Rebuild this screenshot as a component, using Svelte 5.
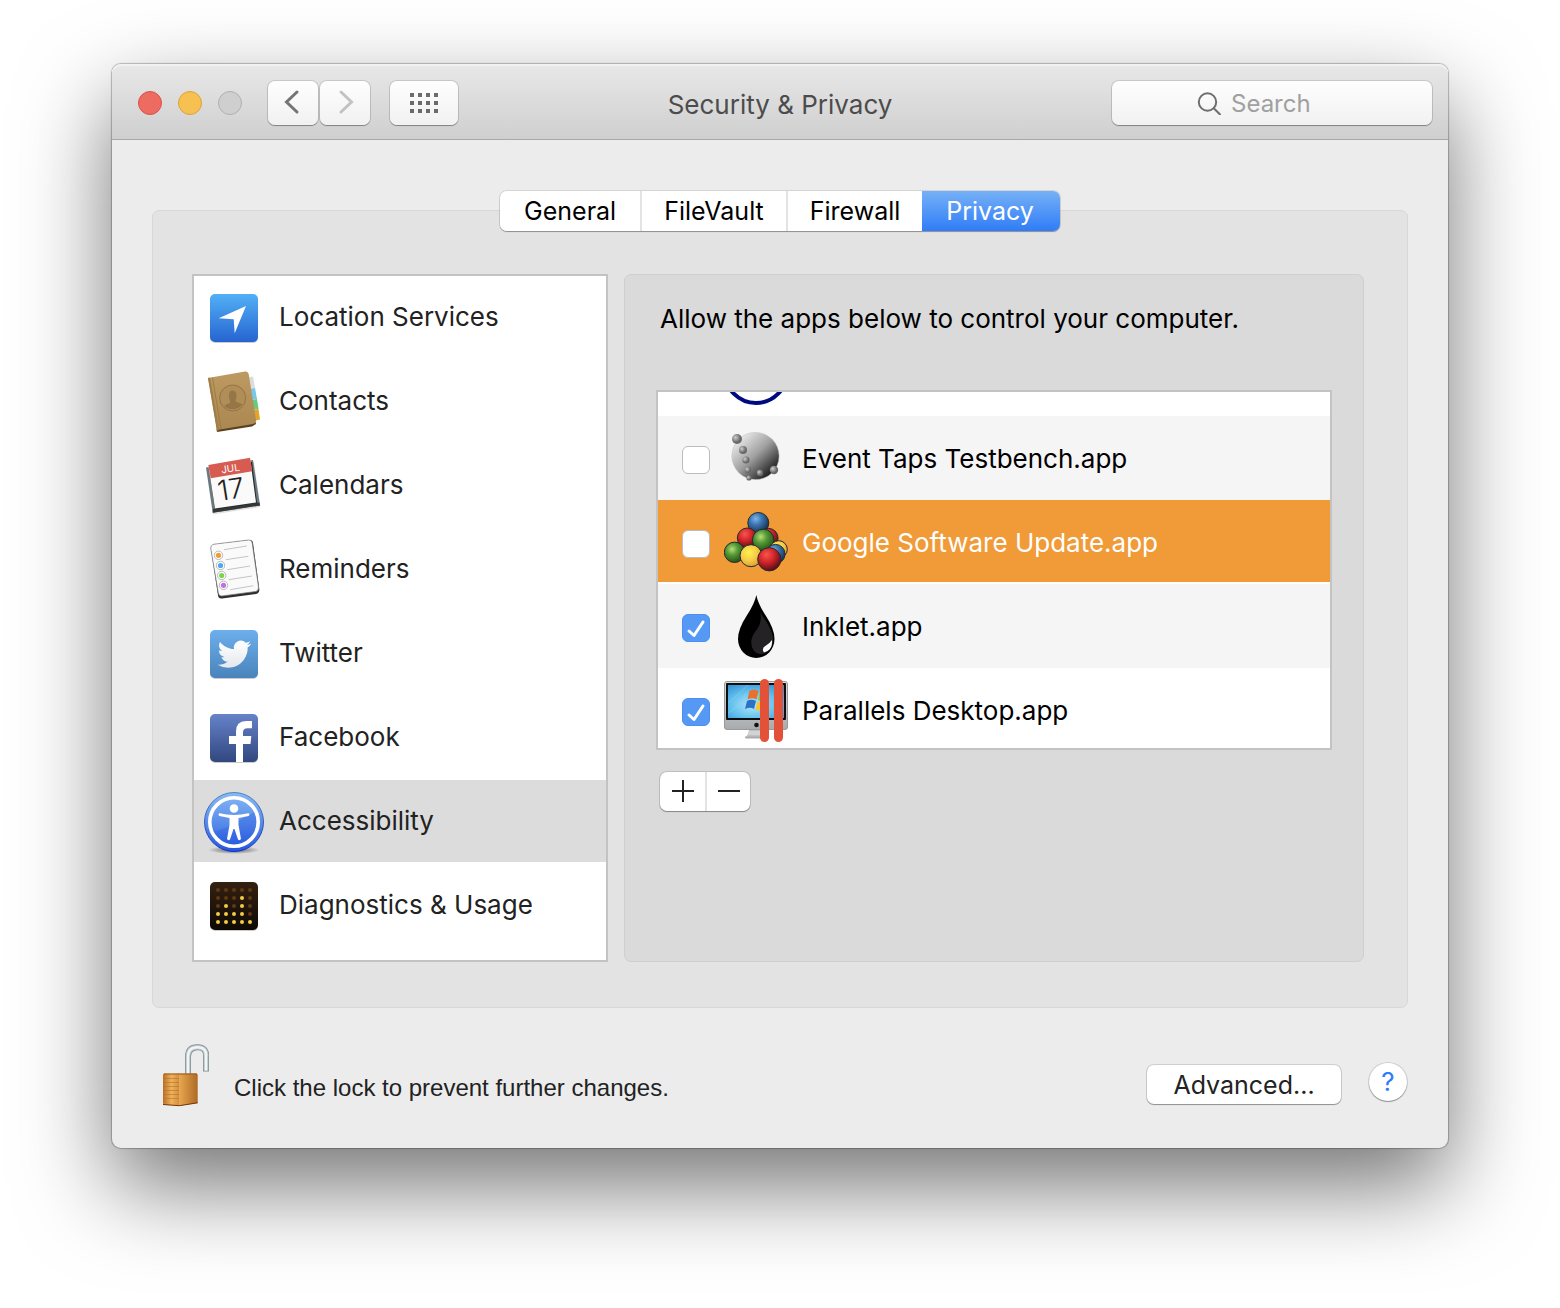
<script>
    let tabs = ['General', 'FileVault', 'Firewall', 'Privacy'];
    let activeTab = $state('Privacy');

    let services = [
        { id: 'location', name: 'Location Services' },
        { id: 'contacts', name: 'Contacts' },
        { id: 'calendars', name: 'Calendars' },
        { id: 'reminders', name: 'Reminders' },
        { id: 'twitter', name: 'Twitter' },
        { id: 'facebook', name: 'Facebook' },
        { id: 'accessibility', name: 'Accessibility' },
        { id: 'diagnostics', name: 'Diagnostics & Usage' }
    ];
    let activeService = $state('accessibility');

    let apps = $state([
        { id: 'taps', name: 'Event Taps Testbench.app', allowed: false },
        { id: 'google', name: 'Google Software Update.app', allowed: false },
        { id: 'inklet', name: 'Inklet.app', allowed: true },
        { id: 'parallels', name: 'Parallels Desktop.app', allowed: true }
    ]);
    let activeApp = $state('google');
    let query = $state('');

    // lit rows, counted from the bottom, for each column of the dot display
    let levels = [2, 3, 2, 4, 1];

    let taps = [
        [13, 12, 5], [19, 23, 4], [22, 33, 3.6], [24, 43, 3.2],
        [25, 51, 2.6], [36, 46, 3.2], [50, 43, 4.2]
    ];

    let balls = [
        [34.3, 12, 10.5, 'blue'], [44.5, 27, 9.6, 'red'], [23.3, 27, 10, 'red'],
        [39.3, 29, 10.8, 'green'], [54.7, 38.3, 8.6, 'yellow'], [51.5, 43, 9.6, 'blue'],
        [10.5, 41.3, 10.2, 'green'], [27, 44.7, 11, 'yellow'], [45.3, 48.3, 11.6, 'red']
    ];

    function removeApp() {
        apps = apps.filter(app => app.id !== activeApp);
    }
</script>

{#snippet serviceIcon(id)}
    <svg class="icon" viewBox="0 0 64 64" aria-hidden="true">
        {#if id === 'location'}
            <defs>
                <linearGradient id="locationBg" x2="0" y2="1"><stop stop-color="#52b0f5" /><stop offset="1" stop-color="#2664d1" /></linearGradient>
            </defs>
            <rect x="8" y="9" width="48" height="48" rx="5" fill="#000" opacity=".2" />
            <rect x="8" y="8" width="48" height="48" rx="5" fill="url(#locationBg)" />
            <path d="M44 20 16.7 32.3 31.7 33.3 32.7 47.3Z" fill="#fff" />
        {:else if id === 'contacts'}
            <defs>
                <linearGradient id="leather" x2="0" y2="1"><stop stop-color="#bd9a61" /><stop offset="1" stop-color="#ab8751" /></linearGradient>
            </defs>
            <path d="M45 7.5 51 6.5 53 18 47 19Z" fill="#dcdcdc" />
            <path d="M47 19 53 18 55 29 49 30Z" fill="#79c6e8" />
            <path d="M49 30 55 29 56.5 39 50 40Z" fill="#68ca7c" />
            <path d="M50 40 56.5 39 58 49.5 52 51Z" fill="#e0a52c" />
            <path d="M14.5 59 15 62 50 56.5 54 54 53 50Z" fill="#5b4120" />
            <path d="M6 8 43 1.5Q46 1 46.7 4L54 50Q54.3 53.3 51 54L15 60Z" fill="url(#leather)" />
            <path d="M6 8 8 7.6 17 59.5 15 61.5Z" fill="#a17d48" />
            <path d="M10.5 7.5 19 59" stroke="#987643" stroke-width=".8" />
            <circle cx="30.7" cy="28" r="13" fill="#b18e57" stroke="#957346" stroke-width="1" />
            <path d="M22 36.5Q24 34 28 33Q28.8 31.5 27.3 29Q25.5 21 30.2 20.5Q35.5 20.5 34.3 28Q33 31 34 32Q38 32.5 40.5 34.5Q33 43 22 36.5Z" fill="#967546" />
        {:else if id === 'calendars'}
            <path d="M5 15 52 8 58.5 53 11 60.5Z" fill="#000" opacity=".12" />
            <path d="M4 13.5 51 6 58 51.5 10.7 58.7Z" fill="#6b7880" />
            <path d="M11 55 57.5 48.5 58 51.5 10.7 58.7Z" fill="#343836" />
            <path d="M7 15 50 8 55 49 13 55.5Z" fill="#222826" />
            <path d="M6.3 11 48 3.7 54 48.5 13 54.5Z" fill="#fafafa" />
            <path d="M6.3 11 48 3.7 50.3 17.3 8.7 24.3Z" fill="#d75b50" />
            <text x="29" y="18" class="month" transform="rotate(-9 29 18)">JUL</text>
            <text x="30.5" y="45" class="day" transform="rotate(-9 30.5 45)">17</text>
        {:else if id === 'reminders'}
            <path d="M13 6.5 47 2Q50.5 1.5 51 5L57.3 51Q57.7 55 54 56L20 60.5Q16.5 61 16 57.5L9 11Q8.5 7.3 13 6.5Z" fill="#2d2d2d" />
            <path d="M12 6.2 46.5 2Q49.7 1.5 50.2 5L56.5 49Q57 52.7 53.5 53.5L20 58Q17 58.5 16.3 55L8.8 11Q8.3 7 12 6.2Z" fill="#fafafa" stroke="#777" stroke-width=".7" />
            <path d="M22 11.7 44.7 8M23.7 21.7 46.3 18.3M25.3 31.7 48 28M26.7 41.7 50 38M28.3 51.7 51.3 47.7" stroke="#c4c4c4" stroke-width="1" />
            <g fill="#fff" stroke="#aaa" stroke-width=".8">
                <circle cx="16.5" cy="17.3" r="4.2" />
                <circle cx="18.5" cy="27.5" r="4.2" />
                <circle cx="19.7" cy="37.5" r="4.2" />
                <circle cx="21.5" cy="47.3" r="4.2" />
            </g>
            <circle cx="16.5" cy="17.3" r="2.6" fill="#f29a35" />
            <circle cx="18.5" cy="27.5" r="2.6" fill="#4ba9f2" />
            <circle cx="19.7" cy="37.5" r="2.6" fill="#78d64c" />
            <circle cx="21.5" cy="47.3" r="2.6" fill="#bd72de" />
        {:else if id === 'twitter'}
            <defs>
                <linearGradient id="twitterBg" x2="0" y2="1"><stop stop-color="#6cafec" /><stop offset="1" stop-color="#4a83bb" /></linearGradient>
                <linearGradient id="bird" x2="0" y2="1"><stop stop-color="#fff" /><stop offset="1" stop-color="#e3e8ec" /></linearGradient>
            </defs>
            <rect x="8" y="9" width="48" height="48" rx="5" fill="#000" opacity=".2" />
            <rect x="8" y="8" width="48" height="48" rx="5" fill="url(#twitterBg)" />
            <path transform="translate(15.7 15.5) scale(1.39)" fill="url(#bird)" d="M23.953 4.57a10 10 0 01-2.825.775 4.958 4.958 0 002.163-2.723c-.951.555-2.005.959-3.127 1.184a4.92 4.92 0 00-8.384 4.482C7.69 8.095 4.067 6.13 1.64 3.162a4.822 4.822 0 00-.666 2.475c0 1.71.87 3.213 2.188 4.096a4.904 4.904 0 01-2.228-.616v.06a4.923 4.923 0 003.946 4.827 4.996 4.996 0 01-2.212.085 4.936 4.936 0 004.604 3.417 9.867 9.867 0 01-6.102 2.105c-.39 0-.779-.023-1.17-.067a13.995 13.995 0 007.557 2.209c9.053 0 13.998-7.496 13.998-13.985 0-.21 0-.42-.015-.63A9.935 9.935 0 0024 4.59z" />
        {:else if id === 'facebook'}
            <defs>
                <linearGradient id="facebookBg" x2="0" y2="1"><stop stop-color="#6683ca" /><stop offset="1" stop-color="#31477e" /></linearGradient>
            </defs>
            <rect x="8" y="9" width="48" height="48" rx="5" fill="#000" opacity=".2" />
            <rect x="8" y="8" width="48" height="48" rx="5" fill="url(#facebookBg)" />
            <path d="M34 56V38H27V30H34V25.5Q34 15 44 15H50V22.3H45.5Q41 22.3 41 26.5V30H49.3L48.5 38H41V56Z" fill="#fff" />
        {:else if id === 'accessibility'}
            <defs>
                <linearGradient id="accessBg" x2="0" y2="1"><stop stop-color="#87b9f3" /><stop offset=".55" stop-color="#5589e8" /><stop offset="1" stop-color="#2456df" /></linearGradient>
                <linearGradient id="accessRim" x2="0" y2="1"><stop stop-color="#5086bd" /><stop offset="1" stop-color="#1430c8" /></linearGradient>
                <radialGradient id="accessShade"><stop stop-opacity=".6" /><stop offset="1" stop-opacity="0" /></radialGradient>
            </defs>
            <ellipse cx="32" cy="60" rx="26" ry="4" fill="url(#accessShade)" />
            <circle cx="32" cy="32" r="29.5" fill="url(#accessBg)" stroke="url(#accessRim)" />
            <path d="M10 42Q24 39 35 32T53 22A24 24 0 0 1 53 44Q34 66 14 46Z" fill="#1e50dc" opacity=".25" />
            <circle cx="32" cy="32" r="24.2" fill="none" stroke="#fff" stroke-width="3.6" />
            <circle cx="32" cy="18.5" r="4.3" fill="#fff" />
            <path d="M17.5 23.3Q25 25 32 25T46.5 23.3Q48.5 24.5 46.5 26L36.5 28V35L39 49Q37.5 51 36 49.5L32.5 39H31.5L28 49.5Q26.5 51 25 49L27.5 35V28L17.5 26Q15.5 24.5 17.5 23.3Z" fill="#fff" />
        {:else}
            <defs>
                <linearGradient id="panelBg" x2="0" y2="1"><stop stop-color="#35210f" /><stop offset="1" stop-color="#0e0905" /></linearGradient>
            </defs>
            <rect x="8" y="9" width="48" height="48" rx="5" fill="#000" opacity=".2" />
            <rect x="8" y="8" width="48" height="48" rx="5" fill="url(#panelBg)" />
            {#each levels as level, col}
                {#each [5, 4, 3, 2, 1] as height, row}
                    <circle cx={16 + col * 8} cy={16 + row * 8} r="2" fill={height <= level ? '#f3cc45' : '#5e3817'} />
                {/each}
            {/each}
        {/if}
    </svg>
{/snippet}

{#snippet appIcon(id)}
    <svg class="icon" viewBox="0 0 64 64" aria-hidden="true">
        {#if id === 'taps'}
            <defs>
                <linearGradient id="moon" x1=".1" y1=".1" x2=".85" y2=".9"><stop stop-color="#f0f0f0" /><stop offset=".5" stop-color="#a0a0a0" /><stop offset="1" stop-color="#161616" /></linearGradient>
                <radialGradient id="bead" cx=".35" cy=".35"><stop stop-color="#ccc" /><stop offset="1" stop-color="#686868" /></radialGradient>
            </defs>
            <circle cx="31.5" cy="29" r="23.6" fill="url(#moon)" stroke="#bbb" stroke-width=".5" />
            {#each taps as [x, y, r]}
                <circle cx={x} cy={y} {r} fill="url(#bead)" />
            {/each}
        {:else if id === 'google'}
            <defs>
                <radialGradient id="blue" cx=".38" cy=".3" r=".7"><stop stop-color="#7fb6e8" /><stop offset=".4" stop-color="#3d78b4" /><stop offset="1" stop-color="#17304f" /></radialGradient>
                <radialGradient id="red" cx=".38" cy=".3" r=".7"><stop stop-color="#f4574b" /><stop offset=".45" stop-color="#d8272b" /><stop offset="1" stop-color="#5c0d16" /></radialGradient>
                <radialGradient id="green" cx=".38" cy=".35" r=".7"><stop stop-color="#b7dd79" /><stop offset=".4" stop-color="#579a36" /><stop offset="1" stop-color="#1f4a17" /></radialGradient>
                <radialGradient id="yellow" cx=".4" cy=".35" r=".7"><stop stop-color="#fff04d" /><stop offset=".5" stop-color="#f6cd48" /><stop offset="1" stop-color="#dd9a31" /></radialGradient>
            </defs>
            {#each balls as [x, y, r, color]}
                <circle cx={x} cy={y} {r} fill="url(#{color})" stroke="#222c2c" stroke-width="1" />
            {/each}
        {:else if id === 'inklet'}
            <path d="M32.3 0Q34 9 42 21Q50.5 34 50.5 44A18.2 19 0 0 1 14 44Q14 34 22.5 21Q31 8 32.3 0Z" fill="#000" />
            <path d="M36 17Q39 28 31 37Q24 47 30 56Q35 62 43 57Q50 51 49 42Q47 33 40.5 24Z" fill="#242224" />
            <path d="M48 45Q49 55 40 57.5Q37 53 42 50.5Q46 48 48 45Z" fill="#fff" />
        {:else}
            <defs>
                <linearGradient id="case" x2="0" y2="1"><stop stop-color="#ddd" /><stop offset="1" stop-color="#a8abae" /></linearGradient>
                <radialGradient id="desk" cx=".45" cy=".6" r=".7"><stop stop-color="#b4e8fb" /><stop offset=".6" stop-color="#62bfec" /><stop offset="1" stop-color="#3795d6" /></radialGradient>
            </defs>
            <path d="M25 51H41L43 58H21Q24 57 25 51Z" fill="#bfc1c3" />
            <path d="M25 53H41M24.5 55H42" stroke="#eee" stroke-width=".8" />
            <rect x="21" y="57.5" width="24" height="2" rx="1" fill="#a9abad" />
            <rect x=".5" y="2.5" width="63" height="48" rx="2.5" fill="url(#case)" stroke="#999" />
            <rect x="2" y="4" width="60" height="37" rx="1" fill="#0b0d10" />
            <rect x="4" y="6" width="56" height="33" fill="url(#desk)" />
            <path d="M4 24Q15 15 24 6M4 34Q18 26 22 14" stroke="#8bd8f5" stroke-width=".6" fill="none" opacity=".7" />
            <path d="M25.5 12Q30 9 34.500 12L32.5 20.5Q28 18 23.5 20.5Z" fill="#e9702f" />
            <path d="M36 12.5Q40 14.500 45 12L43 20.5Q38 23 34 21Z" fill="#8cc63f" />
            <path d="M23 22Q27.5 19.5 32 22L30 30Q26 27.5 21 30Z" fill="#2b71c5" />
            <path d="M33.5 22.5Q38 25 42.5 22L40.5 30.5Q36 33 31.5 30.5Z" fill="#fbc32d" />
            <circle cx="32.5" cy="46" r="2.3" fill="#111" />
            <rect x="36" y="0" width="9" height="63" rx="4.5" fill="#e35238" />
            <rect x="50" y="0" width="9" height="63" rx="4.5" fill="#e35238" />
        {/if}
    </svg>
{/snippet}

<main class="window">
    <header class="titlebar">
        <div class="left">
            <div class="lights">
                <button class="light close" aria-label="Close"></button>
                <button class="light minimize" aria-label="Minimize"></button>
                <button class="light zoom" aria-label="Zoom" disabled></button>
            </div>
            <div class="history">
                <button class="tool" aria-label="Back">
                    <svg width="24" height="28" viewBox="0 0 24 28"><path d="M16 3 5.5 13 16 23" fill="none" stroke="#747474" stroke-width="3" stroke-linecap="round" /></svg>
                </button>
                <button class="tool" aria-label="Forward" disabled>
                    <svg width="24" height="28" viewBox="0 0 24 28"><path d="M8 3 18.5 13 8 23" fill="none" stroke="#c2c2c2" stroke-width="3" stroke-linecap="round" /></svg>
                </button>
            </div>
            <button class="tool all" aria-label="Show All">
                <svg width="28" height="20" viewBox="0 0 28 20" fill="#6b6b6b">
                    {#each [0, 8, 16, 24] as x}
                        {#each [0, 8, 16] as y}
                            <rect {x} {y} width="4" height="4" />
                        {/each}
                    {/each}
                </svg>
            </button>
        </div>
        <h1>Security &amp; Privacy</h1>
        <label class="search">
            <svg width="24" height="24" viewBox="0 0 24 24" fill="none" stroke="#6e6e6e" stroke-width="2"><circle cx="10.5" cy="11" r="8.7" /><path d="M16.5 17 23.5 24" /></svg>
            <input type="search" placeholder="Search" aria-label="Search" bind:value={query}>
        </label>
    </header>

    <div class="content">
        <div class="tabs" role="tablist">
            {#each tabs as tab}
                <button role="tab" aria-selected={activeTab === tab} class:active={activeTab === tab} onclick={() => activeTab = tab}>{tab}</button>
            {/each}
        </div>

        <section class="group">
            <ul class="services">
                {#each services as service}
                    <li>
                        <button class="service" class:selected={activeService === service.id} onclick={() => activeService = service.id}>
                            {@render serviceIcon(service.id)}
                            <span>{service.name}</span>
                        </button>
                    </li>
                {/each}
            </ul>

            <div class="detail">
                <p>Allow the apps below to control your computer.</p>
                <ul class="apps">
                    <li class="scrolled">
                        <svg class="ring" width="64" height="24" viewBox="0 0 64 24" aria-hidden="true"><circle cx="32" cy="-20" r="31" fill="none" stroke="#000a80" stroke-width="4" /></svg>
                    </li>
                    {#each apps as app}
                        <li class="app" class:selected={activeApp === app.id}>
                            <input type="checkbox" id={app.id} bind:checked={app.allowed} onchange={() => activeApp = app.id}>
                            {@render appIcon(app.id)}
                            <label for={app.id}>{app.name}</label>
                        </li>
                    {/each}
                </ul>
                <div class="edit">
                    <button aria-label="Add">
                        <svg width="22" height="22" viewBox="0 0 22 22"><path d="M11 0V22M0 11H22" stroke="#222" stroke-width="2" /></svg>
                    </button>
                    <button aria-label="Remove" onclick={removeApp}>
                        <svg width="22" height="22" viewBox="0 0 22 22"><path d="M0 11H22" stroke="#222" stroke-width="2" /></svg>
                    </button>
                </div>
            </div>
        </section>

        <footer>
            <button class="lock" aria-label="Lock">
                <svg class="icon" viewBox="0 0 64 64">
                    <defs>
                        <linearGradient id="brassLeft"><stop stop-color="#b96f22" /><stop offset=".5" stop-color="#f0b25c" /><stop offset="1" stop-color="#d08a38" /></linearGradient>
                        <linearGradient id="brassRight"><stop stop-color="#e9a751" /><stop offset="1" stop-color="#ad6a25" /></linearGradient>
                    </defs>
                    <path d="M36 31V13Q36 3.3 45.5 3.3T54 13V27.5" fill="none" stroke="#7d8a8d" stroke-width="6" />
                    <path d="M36 31V13Q36 3.3 45.5 3.3T54 13V26.7" fill="none" stroke="#bcc7ca" stroke-width="4.6" />
                    <path d="M36 31V13Q36 3.3 45.5 3.3T54 13V26.5" fill="none" stroke="#f1f5f6" stroke-width="2.4" />
                    <path d="M11 30.5Q11 29.5 13 29.5H28V62L13 60.8Q11 60.5 11 59Z" fill="url(#brassLeft)" />
                    <path d="M27 29.5H44Q45.7 29.5 45.7 31V59L27 62Z" fill="url(#brassRight)" />
                    <path d="M11 34.5H27M11 38.5H27M11 42.5H27M11 46.5H27M11 50.5H27M11 54.5H27" stroke="#b5732c" stroke-width="1" opacity=".6" />
                    <path d="M12 30H45" stroke="#97591b" />
                    <path d="M11 60.5 27.3 61.7 45.7 58.8" fill="none" stroke="#743708" stroke-width="1" />
                </svg>
            </button>
            <span class="hint">Click the lock to prevent further changes.</span>
            <div class="actions">
                <button class="advanced">Advanced...</button>
                <button class="help" aria-label="Help">?</button>
            </div>
        </footer>
    </div>
</main>

<style>
    :global(body) {
        background: #fff;
    }
    .window {
        margin: 64px 112px 160px;
        border-radius: 9px;
        background: #ececec;
        box-shadow: 0 0 1px 1px rgba(0,0,0,0.25), 0 38px 90px rgba(0,0,0,0.55);
        font-family: Inter, "Liberation Sans", sans-serif;
        font-size: 26px;
        line-height: 32px;
        color: #222;
    }
    button, input {
        font: inherit;
        color: inherit;
        margin: 0;
        padding: 0;
        border: none;
        box-sizing: border-box;
    }
    button svg, .icon {
        display: block;
        flex: none;
    }
    ul {
        list-style: none;
        margin: 0;
        padding: 0;
    }
    .icon {
        width: 64px;
        height: 64px;
    }
    .month {
        font-size: 10px;
        fill: #fff;
        text-anchor: middle;
    }
    .day {
        font-size: 28px;
        font-weight: 300;
        fill: #222;
        text-anchor: middle;
    }

    /* title bar */
    .titlebar {
        display: grid;
        grid-template-columns: 1fr auto 1fr;
        align-items: center;
        height: 76px;
        padding: 0 16px;
        box-sizing: border-box;
        border-bottom: 1px solid #a8a8a8;
        border-radius: 9px 9px 0 0;
        background: linear-gradient(#e8e8e8, #cfcfcf);
        box-shadow: inset 0 2px 0 #f1f1f1;
    }
    .left {
        display: flex;
        align-items: center;
        gap: 20px;
        padding: 2px 0 0 10px;
    }
    .lights {
        display: flex;
        gap: 16px;
        margin-right: 6px;
    }
    .light {
        width: 24px;
        height: 24px;
        border-radius: 50%;
    }
    .close {
        background: #ed6b60;
        border: 1px solid #d9534a;
    }
    .minimize {
        background: #f6c151;
        border: 1px solid #dca23b;
    }
    .zoom {
        background: #cfcfcf;
        border: 1px solid #b0b0b0;
    }
    .history {
        display: flex;
        gap: 2px;
    }
    .tool {
        display: flex;
        align-items: center;
        justify-content: center;
        width: 50px;
        height: 44px;
        border-radius: 7px;
        background: linear-gradient(#fefefe, #f1f1f1);
        box-shadow: 0 0 0 1px rgba(0,0,0,0.12), 0 1px 1px rgba(0,0,0,0.3);
    }
    .all {
        width: 68px;
    }
    h1 {
        margin: 0;
        padding-top: 6px;
        font-size: 26px;
        font-weight: 400;
        color: #4c4c4c;
    }
    .search {
        justify-self: end;
        display: flex;
        align-items: center;
        justify-content: center;
        gap: 10px;
        width: 320px;
        height: 44px;
        margin-top: 2px;
        border-radius: 7px;
        background: linear-gradient(#fefefe, #f1f1f1);
        box-shadow: 0 0 0 1px rgba(0,0,0,0.12), 0 1px 1px rgba(0,0,0,0.3);
    }
    .search input {
        width: 116px;
        padding-top: 2px;
        background: none;
        outline: none;
        font-size: 24px;
    }
    .search input::placeholder {
        color: #a0a0a0;
    }

    .content {
        padding: 51px 40px 40px;
    }
    .tabs {
        position: relative;
        z-index: 1;
        display: flex;
        width: fit-content;
        margin: 0 auto -21px;
        border-radius: 7px;
        box-shadow: 0 0 0 1px rgba(0,0,0,0.1), 0 1px 1px rgba(0,0,0,0.3);
    }
    .tabs button {
        height: 40px;
        padding: 0 22px;
        background: #fff;
        border-right: 2px solid #e3e3e3;
        font-size: 25px;
        color: #000;
    }
    .tabs button:first-child {
        padding: 0 24px;
        border-radius: 7px 0 0 7px;
    }
    .tabs button:last-child {
        padding: 0 26px 0 24px;
        border-radius: 0 7px 7px 0;
    }
    .tabs button:last-child, .tabs button:nth-last-child(2) {
        border-right: none;
    }
    .tabs button.active {
        background: linear-gradient(#76b1f6, #2f7cf7);
        color: #fff;
    }
    .group {
        display: grid;
        grid-template-columns: 416fr 740fr;
        gap: 16px;
        padding: 63px 43px 45px 39px;
        border: 1px solid #d8d8d8;
        border-radius: 7px;
        background: #e3e3e3;
    }
    .services {
        padding-bottom: 12px;
        border: 2px solid #c3c3c3;
        background: #fff;
    }
    .service {
        display: flex;
        align-items: center;
        gap: 13px;
        width: 100%;
        height: 84px;
        padding: 2px 8px 0;
        border-bottom: 2px solid #fff;
        background: #fff;
        text-align: left;
    }
    .service span {
        padding-bottom: 2px;
    }
    .service.selected {
        background: #dcdcdc;
    }

    .detail {
        padding: 28px 31px;
        border: 1px solid #cfcfcf;
        border-radius: 7px;
        background: #dadada;
        color: #000;
    }
    .detail p {
        margin: 0 4px 55px;
    }
    .apps {
        height: 356px;
        overflow: hidden;
        border: 2px solid #c3c3c3;
        background: #fff;
    }
    .scrolled {
        height: 24px;
        padding-left: 66px;
    }
    .ring {
        display: block;
    }
    .app {
        display: flex;
        align-items: center;
        gap: 14px;
        height: 84px;
        padding: 4px 24px 0;
        box-sizing: border-box;
        border-bottom: 2px solid transparent;
    }
    .app:nth-child(even) {
        background: #f5f5f5;
    }
    .app.selected {
        background: #f19a38;
        border-bottom-color: #fff;
        color: #fff;
    }
    .app input {
        appearance: none;
        width: 28px;
        height: 28px;
        margin-top: 2px;
        border: 1px solid #bcbcbc;
        border-radius: 6px;
        background: #fff;
    }
    .app input:checked {
        border-color: #4b8ff0;
        background: #5599f5 url("data:image/svg+xml,%3Csvg xmlns='http://www.w3.org/2000/svg' viewBox='0 0 26 26'%3E%3Cpath d='M6 16 11 20.5 20 7' fill='none' stroke='white' stroke-width='3' stroke-linecap='round' stroke-linejoin='round'/%3E%3C/svg%3E");
    }

    .edit {
        display: flex;
        width: fit-content;
        margin: 22px 0 0 4px;
        border-radius: 7px;
        background: #fff;
        box-shadow: 0 0 0 1px rgba(0,0,0,0.12), 0 1px 1px rgba(0,0,0,0.3);
    }
    .edit button {
        padding: 8px 11px 9px 12px;
        background: none;
    }
    .edit button + button {
        padding: 8px 10px 9px 11px;
        border-left: 2px solid #e3e3e3;
    }

    footer {
        display: flex;
        align-items: flex-end;
        padding-top: 36px;
    }
    .lock {
        background: none;
    }
    .hint {
        margin-left: 18px;
        font-family: "Liberation Sans", Arial, sans-serif;
        font-size: 24px;
        line-height: 40px;
    }
    .actions {
        display: flex;
        gap: 28px;
        margin: 0 0 4px auto;
    }
    .advanced {
        width: 194px;
        height: 39px;
        margin-top: 2px;
        border-radius: 7px;
        background: #fff;
        box-shadow: 0 0 0 1px rgba(0,0,0,0.12), 0 1px 1px rgba(0,0,0,0.3);
        font-size: 25px;
    }
    .help {
        width: 38px;
        height: 38px;
        margin-right: 1px;
        border-radius: 50%;
        background: #fff;
        color: #2f7cf7;
        box-shadow: 0 0 0 1px rgba(0,0,0,0.12), 0 1px 1px rgba(0,0,0,0.3);
    }
</style>
